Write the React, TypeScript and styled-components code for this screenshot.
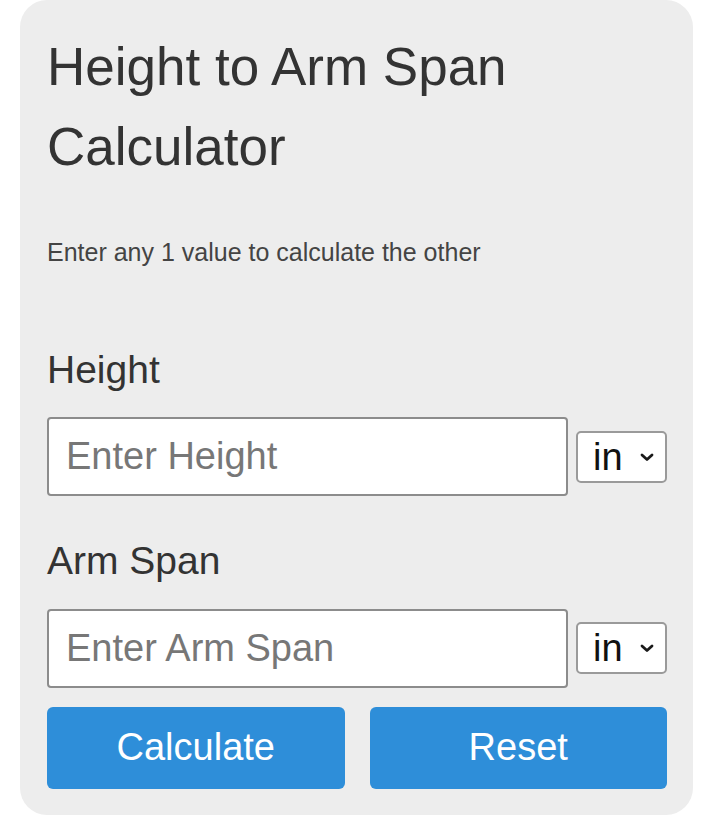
import React from 'react';
import styled, { createGlobalStyle } from 'styled-components';

const GlobalStyle = createGlobalStyle`
  html, body {
    margin: 0;
    padding: 0;
    background: #ffffff;
  }
  body {
    font-family: 'Liberation Sans', Arial, sans-serif;
  }
`;

const units = ['in', 'cm', 'ft', 'm'];

const Page = styled.div`
  padding: 0 27px 23px 20px;
`;

const Card = styled.div`
  background: #ededed;
  border-radius: 27px;
  padding: 27px 26px 26px 27px;
  width: 620px;
`;

const Title = styled.h1`
  margin: 0;
  font-size: 53px;
  line-height: 80px;
  font-weight: normal;
  color: #333333;
`;

const Intro = styled.p`
  margin: 47px 0 0;
  font-size: 25px;
  line-height: 37.5px;
  color: #444444;
`;

const Field = styled.div<{ $first?: boolean }>`
  margin-top: ${(p) => (p.$first ? '69px' : '36px')};
`;

const Label = styled.label`
  display: block;
  font-size: 39px;
  line-height: 58.5px;
  color: #333333;
`;

const InputRow = styled.div`
  display: flex;
  align-items: center;
  gap: 8px;
  margin-top: 18px;
`;

const TextInput = styled.input`
  box-sizing: border-box;
  width: 521px;
  height: 79px;
  padding: 0 17px;
  border: 2px solid #8c8c8c;
  border-radius: 4px;
  background: #ffffff;
  font-family: inherit;
  font-size: 38px;
  color: #222222;
  outline: none;

  &::placeholder {
    color: #777777;
  }
`;

const SelectWrap = styled.div`
  position: relative;
  width: 91px;
  height: 52px;
`;

const UnitSelect = styled.select`
  appearance: none;
  box-sizing: border-box;
  width: 100%;
  height: 100%;
  padding: 0 0 0 15px;
  border: 2px solid #9a9a9a;
  border-radius: 5px;
  background: #ffffff;
  font-family: inherit;
  font-size: 38px;
  line-height: 1;
  color: #111111;
  outline: none;
`;

const Chevron = styled.svg`
  position: absolute;
  right: 13px;
  top: 22px;
  width: 14px;
  height: 9px;
  pointer-events: none;
`;

const Buttons = styled.div`
  display: grid;
  grid-template-columns: 1fr 1fr;
  gap: 25px;
  margin-top: 19px;
`;

const ActionButton = styled.button`
  height: 82px;
  border: none;
  border-radius: 6px;
  background: #2e8ed9;
  color: #ffffff;
  font-family: inherit;
  font-size: 38px;
  cursor: pointer;
`;

const UnitPicker = () => (
  <SelectWrap>
    <UnitSelect defaultValue="in">
      {units.map((u) => (
        <option key={u} value={u}>
          {u}
        </option>
      ))}
    </UnitSelect>
    <Chevron viewBox="0 0 14 9">
      <path
        d="M2 2 L7 6.5 L12 2"
        fill="none"
        stroke="#1a1a1a"
        strokeWidth="2.8"
        strokeLinecap="round"
        strokeLinejoin="round"
      />
    </Chevron>
  </SelectWrap>
);

const App = () => {
  return (
    <Page>
      <GlobalStyle />
      <Card>
        <Title>
          Height to Arm Span
          <br />
          Calculator
        </Title>
        <Intro>Enter any 1 value to calculate the other</Intro>

        <Field $first>
          <Label htmlFor="height">Height</Label>
          <InputRow>
            <TextInput id="height" type="text" placeholder="Enter Height" />
            <UnitPicker />
          </InputRow>
        </Field>

        <Field>
          <Label htmlFor="armspan">Arm Span</Label>
          <InputRow>
            <TextInput id="armspan" type="text" placeholder="Enter Arm Span" />
            <UnitPicker />
          </InputRow>
        </Field>

        <Buttons>
          <ActionButton type="button">Calculate</ActionButton>
          <ActionButton type="button">Reset</ActionButton>
        </Buttons>
      </Card>
    </Page>
  );
};

export default App;
